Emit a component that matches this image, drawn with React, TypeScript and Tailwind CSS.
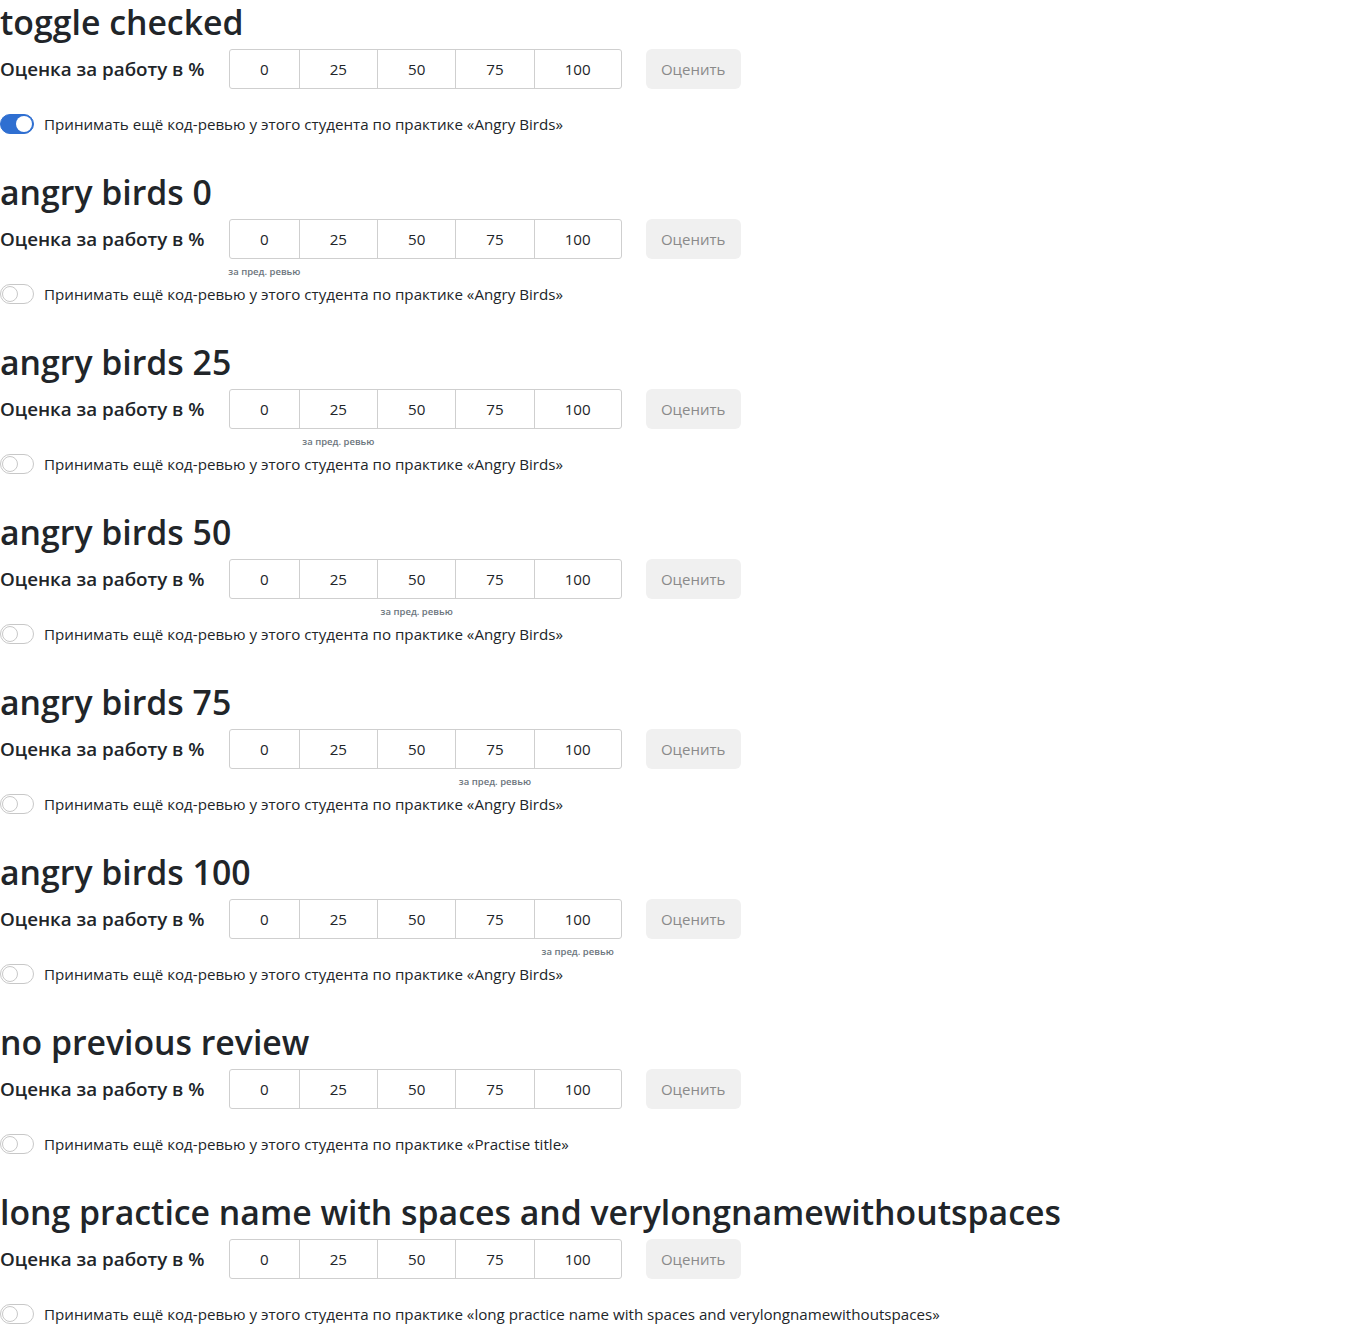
import React, { useState } from 'react';

const marks = [0, 25, 50, 75, 100];

interface SectionProps {
  title: string;
  practice: string;
  prev?: number;
  checked?: boolean;
}

const Toggle: React.FC<{ on: boolean; onChange: () => void }> = ({ on, onChange }) => (
  <button
    type="button"
    onClick={onChange}
    className={`relative w-[34px] h-[20px] rounded-full border shrink-0 transition-colors ${
      on ? 'bg-[#2f6fd1] border-[#2f6fd1]' : 'bg-white border-[#c8c8c8]'
    }`}
  >
    <span
      className={`absolute top-[1px] w-[16px] h-[16px] rounded-full bg-white ${
        on ? 'left-[15px]' : 'left-[1px] border border-[#c8c8c8]'
      }`}
    />
  </button>
);

const Section: React.FC<SectionProps> = ({ title, practice, prev, checked = false }) => {
  const [on, setOn] = useState(checked);
  const [value, setValue] = useState<number | null>(null);

  return (
    <section className="pb-[36px]">
      <h2 className="text-[33.8px] leading-[44px] font-semibold text-[#212529] whitespace-nowrap">{title}</h2>
      <div className="flex items-center mt-[5px] h-10">
        <span className="text-[18.8px] font-semibold text-[#212529] w-[229px] shrink-0">Оценка за работу в %</span>
        <div className="flex h-10 border border-[#cfcfcf] rounded-[3px] bg-white">
          {marks.map((m, i) => (
            <button
              key={m}
              type="button"
              onClick={() => setValue(m)}
              className={`relative px-[30px] text-[15.15px] text-[#212529] ${i > 0 ? 'border-l border-[#cfcfcf]' : ''} ${
                value === m ? 'bg-[#e9ecef]' : ''
              }`}
            >
              {m}
              {m === prev && (
                <span className="absolute left-1/2 -translate-x-1/2 top-[calc(100%+8px)] whitespace-nowrap text-[9.5px] leading-[12px] font-semibold text-[#6c757d]">
                  за пред. ревью
                </span>
              )}
            </button>
          ))}
        </div>
        <button
          type="button"
          disabled
          className="ml-6 h-10 w-[95px] rounded-[6px] bg-[#f0f0f0] text-[15px] text-[#8a8a8a]"
        >
          Оценить
        </button>
      </div>
      <div className="h-[25px]" />
      <label className="flex items-center h-5 gap-[10px] text-[15.15px] text-[#212529] whitespace-nowrap">
        <Toggle on={on} onChange={() => setOn(!on)} />
        <span>Принимать ещё код-ревью у этого студента по практике «{practice}»</span>
      </label>
    </section>
  );
};

export default function App() {
  const sections: SectionProps[] = [
    { title: 'toggle checked', practice: 'Angry Birds', checked: true },
    { title: 'angry birds 0', practice: 'Angry Birds', prev: 0 },
    { title: 'angry birds 25', practice: 'Angry Birds', prev: 25 },
    { title: 'angry birds 50', practice: 'Angry Birds', prev: 50 },
    { title: 'angry birds 75', practice: 'Angry Birds', prev: 75 },
    { title: 'angry birds 100', practice: 'Angry Birds', prev: 100 },
    { title: 'no previous review', practice: 'Practise title' },
    {
      title: 'long practice name with spaces and verylongnamewithoutspaces',
      practice: 'long practice name with spaces and verylongnamewithoutspaces',
    },
  ];

  return (
    <div className="bg-white min-h-[1330px]" style={{ fontFamily: '"Open Sans", sans-serif' }}>
      {sections.map((s) => (
        <Section key={s.title} {...s} />
      ))}
    </div>
  );
}
